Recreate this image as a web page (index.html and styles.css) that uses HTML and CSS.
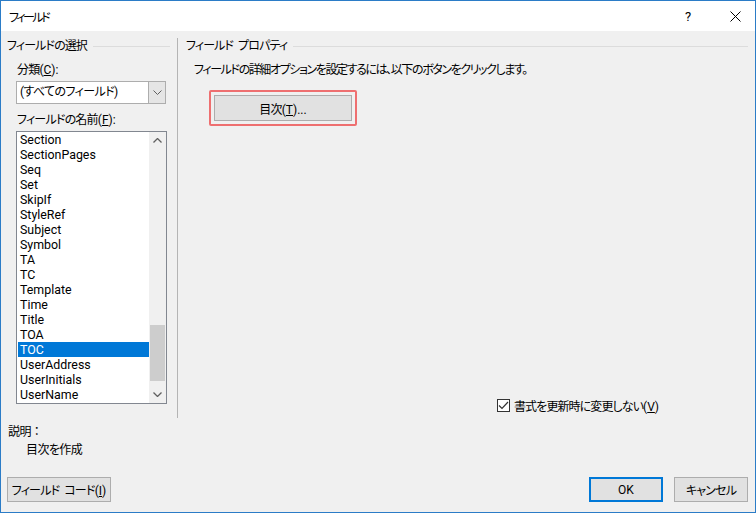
FILE: index.html
```html
<!DOCTYPE html>
<html lang="ja">
<head>
    <meta charset="UTF-8">
    <title>フィールド</title>
    <link rel="stylesheet" href="styles.css">
</head>
<body>
    <div class="window">
        <div class="titlebar">
            <span class="title">フィールド</span>
            <span class="help">?</span>
            <span class="close">
                <svg width="11" height="11" viewBox="0 0 11 11"><path d="M0.5 0.5 L10.5 10.5 M10.5 0.5 L0.5 10.5" stroke="#000" stroke-width="1" fill="none"/></svg>
            </span>
        </div>
        <div class="content">
            <div class="main">
                <div class="left">
                    <div class="group-title"><span>フィールドの選択</span></div>
                    <div class="label">分類<span class="key">(<u>C</u>):</span></div>
                    <div class="select">
                        <span class="select-text">(すべてのフィールド)</span>
                        <span class="select-btn">
                            <svg width="9" height="5" viewBox="0 0 9 5"><path d="M0.5 0.5 L4.5 4.5 L8.5 0.5" stroke="#606060" fill="none"/></svg>
                        </span>
                    </div>
                    <div class="label">フィールドの名前<span class="key">(<u>F</u>):</span></div>
                    <div class="listbox">
                        <ul class="items">
                            <li>Section</li>
                            <li>SectionPages</li>
                            <li>Seq</li>
                            <li>Set</li>
                            <li>SkipIf</li>
                            <li>StyleRef</li>
                            <li>Subject</li>
                            <li>Symbol</li>
                            <li>TA</li>
                            <li>TC</li>
                            <li>Template</li>
                            <li>Time</li>
                            <li>Title</li>
                            <li>TOA</li>
                            <li class="selected">TOC</li>
                            <li>UserAddress</li>
                            <li>UserInitials</li>
                            <li>UserName</li>
                        </ul>
                        <div class="scrollbar">
                            <span class="arrow">
                                <svg width="9" height="5" viewBox="0 0 9 5"><path d="M0.5 4.5 L4.5 0.5 L8.5 4.5" stroke="#606060" stroke-width="1.3" fill="none"/></svg>
                            </span>
                            <div class="track"><div class="thumb"></div></div>
                            <span class="arrow">
                                <svg width="9" height="5" viewBox="0 0 9 5"><path d="M0.5 0.5 L4.5 4.5 L8.5 0.5" stroke="#606060" stroke-width="1.3" fill="none"/></svg>
                            </span>
                        </div>
                    </div>
                </div>
                <div class="right">
                    <div class="group-title"><span>フィールド<span class="sp"> </span>プロパティ</span></div>
                    <div class="desc">フィールドの詳細オプションを設定するには、以下のボタンをクリックします。</div>
                    <div class="highlight">
                        <button class="btn toc-btn">目次<span class="key">(<u>T</u>)...</span></button>
                    </div>
                    <label class="check-row">
                        <span class="checkbox">
                            <svg width="11" height="9" viewBox="0 0 11 9"><path d="M1 4.5 L4 7.5 L10 1" stroke="#333" stroke-width="1.2" fill="none"/></svg>
                        </span>
                        <span>書式を更新時に変更しない<span class="key">(<u>V</u>)</span></span>
                    </label>
                </div>
            </div>
            <div class="explain">
                <div>説明<span class="colon">：</span></div>
                <div class="explain-text">目次を作成</div>
            </div>
            <div class="footer">
                <button class="btn code-btn">フィールド<span class="sp"> </span>コード<span class="key">(<u>I</u>)</span></button>
                <div class="footer-right">
                    <button class="btn ok-btn"><span class="key">OK</span></button>
                    <button class="btn">キャンセル</button>
                </div>
            </div>
        </div>
    </div>
</body>
</html>
```

FILE: styles.css
```css
* {
    box-sizing: border-box;
}

body {
    margin: 0;
    width: 756px;
    height: 513px;
    font-family: Roboto, "Noto Sans CJK JP", sans-serif;
    font-size: 12px;
    font-feature-settings: "palt";
    color: #000;
    background: #fff;
}

.window {
    width: 756px;
    height: 513px;
    border: 1px solid #2b7cc7;
    background: #f0f0f0;
    display: flex;
    flex-direction: column;
}

.titlebar {
    height: 30px;
    background: #fff;
    display: flex;
    align-items: center;
    padding-left: 8px;
    flex-shrink: 0;
}

.title {
    flex: 1;
    letter-spacing: -2.5px;
}

.help {
    width: 20px;
    font-size: 13px;
    margin-right: 25px;
}

.close {
    width: 25px;
    display: flex;
    align-items: center;
}

.content {
    flex: 1;
    display: flex;
    flex-direction: column;
    padding: 0 7px 0 6px;
}

.main {
    display: flex;
    height: 380px;
    margin-top: 7px;
}

.left {
    width: 170px;
    padding-right: 7px;
    flex-shrink: 0;
}

.right {
    flex: 1;
    border-left: 1px solid #b4b4b4;
    padding-left: 8px;
    display: flex;
    flex-direction: column;
}

.key {
    letter-spacing: 0;
}

.sp {
    letter-spacing: 0;
    padding-right: 2px;
}

.group-title {
    height: 16px;
    display: flex;
    align-items: center;
    line-height: 16px;
    letter-spacing: -0.9px;
}

.group-title::after {
    content: "";
    flex: 1;
    border-top: 1px solid #dcdcdc;
    margin-left: 6px;
}

.label {
    height: 16px;
    line-height: 16px;
    margin-top: 8px;
    padding-left: 10px;
    letter-spacing: -0.8px;
}

.select {
    margin: 3px 0 0 9px;
    width: 150px;
    height: 23px;
    border: 1px solid #adadad;
    background: #fff;
    display: flex;
}

.select-text {
    flex: 1;
    line-height: 21px;
    padding-left: 3px;
    letter-spacing: -0.6px;
}

.select-btn {
    width: 17px;
    background: #e5e5e5;
    border-left: 1px solid #adadad;
    display: flex;
    align-items: center;
    justify-content: center;
}

.label + .listbox {
    margin-top: 3px;
}

.listbox {
    margin-left: 9px;
    width: 151px;
    height: 273px;
    border: 1px solid #828790;
    background: #fff;
    display: flex;
}

.items {
    list-style: none;
    margin: 0;
    padding: 0 0 0 1px;
    flex: 1;
    font-size: 12.4px;
}

.items li {
    height: 15px;
    line-height: 15px;
    padding-left: 2px;
}

.items li.selected {
    background: #0078d7;
    color: #fff;
}

.scrollbar {
    width: 17px;
    background: #f0f0f0;
    display: flex;
    flex-direction: column;
}

.arrow {
    height: 17px;
    display: flex;
    align-items: center;
    justify-content: center;
}

.track {
    flex: 1;
    display: flex;
    flex-direction: column;
    justify-content: flex-end;
    padding: 0 1px 5px;
}

.thumb {
    height: 56px;
    background: #cdcdcd;
}

.desc {
    margin-top: 8px;
    padding-left: 8px;
    height: 16px;
    line-height: 16px;
    letter-spacing: -1.4px;
}

.highlight {
    margin: 12px 0 0 23px;
    width: 148px;
    height: 36px;
    border: 2px solid #ee6f70;
    border-radius: 2px;
    padding: 3px;
}

.btn {
    font-family: inherit;
    font-size: 12px;
    font-feature-settings: "palt";
    color: #000;
    background: #e1e1e1;
    border: 1px solid #adadad;
    height: 25px;
    width: 74px;
    padding: 0;
    letter-spacing: -0.8px;
}

.toc-btn {
    width: 138px;
    height: 26px;
}

.check-row {
    margin-top: auto;
    margin-bottom: 6px;
    padding-left: 311px;
    display: flex;
    align-items: center;
    height: 14px;
    gap: 4px;
    letter-spacing: -0.9px;
}

.checkbox {
    width: 13px;
    height: 13px;
    border: 1px solid #333;
    background: #fff;
    display: flex;
    align-items: center;
    justify-content: center;
}

.explain {
    margin-top: 6px;
    line-height: 16px;
    padding-left: 1px;
    letter-spacing: -0.6px;
}

.colon {
    font-feature-settings: normal;
    letter-spacing: 0;
}

.explain-text {
    margin-top: 2px;
    padding-left: 18px;
}

.footer {
    margin-top: 19px;
    display: flex;
    justify-content: space-between;
}

.code-btn {
    width: 104px;
}

.footer-right {
    display: flex;
    gap: 11px;
}

.ok-btn {
    border: 1px solid #0078d7;
    box-shadow: inset 0 0 0 1px #0078d7;
}
```
